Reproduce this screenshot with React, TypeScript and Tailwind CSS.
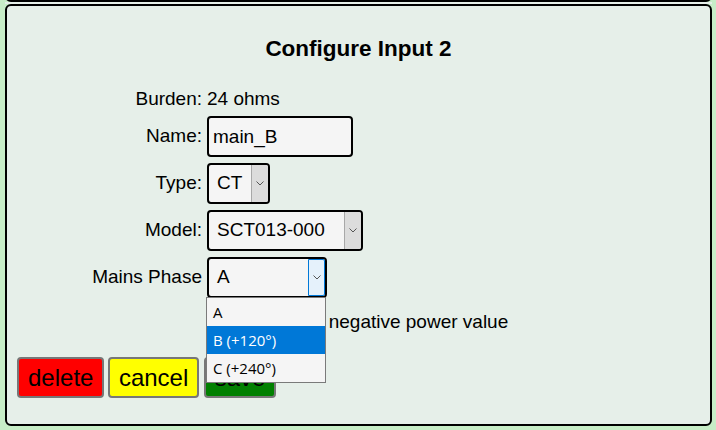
import type { ReactNode } from 'react';

function Chevron() {
  return (
    <svg width="8" height="5" viewBox="0 0 8 5" fill="none">
      <polyline points="0.5,0.5 4,4 7.5,0.5" stroke="#555" strokeWidth="1" />
    </svg>
  );
}

type SelectBoxProps = {
  value: string;
  width: string;
  focused?: boolean;
  children?: ReactNode;
};

function SelectBox({ value, width, focused, children }: SelectBoxProps) {
  return (
    <div className={`relative flex h-[41px] ${width} rounded-[4px] border-2 border-black bg-[#f5f5f5]`}>
      <div className="flex flex-1 items-center pl-[8px]">{value}</div>
      {focused ? (
        <div className="flex w-[17px] items-center justify-center rounded-r-[2px] border border-[#0078d7] bg-[#e5f1fb]">
          <Chevron />
        </div>
      ) : (
        <div className="flex w-[17px] items-center justify-center rounded-r-[2px] border-l border-[#a8a8a8] bg-[#dcdcdc]">
          <Chevron />
        </div>
      )}
      {children}
    </div>
  );
}

function Row({ label, children }: { label: string; children: ReactNode }) {
  return (
    <div className="flex items-center">
      <div className="w-[195px] text-right">{label}</div>
      <div className="ml-[5px]">{children}</div>
    </div>
  );
}

const phases = ['A', 'B (+120°)', 'C (+240°)'];

export default function App() {
  return (
    <div className="h-[430px] w-[716px] overflow-hidden bg-[#c7edc7] font-['Liberation_Sans',Arial,sans-serif] text-black">
      <div className="ml-[5px] flex w-[707px] flex-col">
        {/* bottom edge of the panel above */}
        <div className="-mt-[8px] h-[10px] rounded-b-[6px] border-2 border-black bg-[#e6efe9]" />
        <div className="h-[2px] bg-[#e6efe9]" />

        <div className="h-[422px] rounded-[6px] border-2 border-black bg-[#e6efe9]">
          <h2 className="pt-[30px] text-center text-[22.5px] font-bold leading-[25px]">Configure Input 2</h2>

          <div className="mt-[27px] flex flex-col text-[19px]">
            <div className="flex h-[22px] items-center leading-[22px]">
              <div className="w-[195px] text-right">Burden:</div>
              <div className="ml-[5px]">24 ohms</div>
            </div>

            <div className="mt-[6px] flex flex-col gap-[6px]">
              <Row label="Name:">
                <input
                  defaultValue="main_B"
                  className="h-[41px] w-[146px] rounded-[4px] border-2 border-black bg-[#f5f5f5] px-[4px] text-[19px] outline-none"
                />
              </Row>
              <Row label="Type:">
                <SelectBox value="CT" width="w-[63px]" />
              </Row>
              <Row label="Model:">
                <SelectBox value="SCT013-000" width="w-[156px]" />
              </Row>
              <Row label="Mains Phase">
                <SelectBox value="A" width="w-[120px]" focused>
                  <div className="absolute left-[-3px] top-[38px] z-10 w-[120px] border border-[#7a7a7a] bg-[#f5f5f5] font-['Open_Sans','Noto_Sans',sans-serif] text-[15px]">
                    {phases.map((p, i) => (
                      <div
                        key={p}
                        className={`flex h-[28px] items-center pl-[6px] ${i === 1 ? 'bg-[#0078d7] text-white' : 'text-black'}`}
                      >
                        {p}
                      </div>
                    ))}
                  </div>
                </SelectBox>
              </Row>
            </div>

            <div className="mt-[13px] flex h-[22px] items-center leading-[22px]">
              <div className="w-[195px]" />
              <div className="ml-[59px] flex items-center">
                <input type="checkbox" className="mr-[4px] h-[13px] w-[13px]" />
                <span>Allow negative power value</span>
              </div>
            </div>
          </div>

          <div className="mt-[24px] flex gap-[4px] pl-[10px] text-[24px]">
            <button className="rounded-[4px] border-2 border-[#777] bg-[#ff0000] px-[9px] py-[5px] leading-[27px]">delete</button>
            <button className="rounded-[4px] border-2 border-[#777] bg-[#ffff00] px-[8.5px] py-[5px] leading-[27px]">cancel</button>
            <button className="ml-[1px] rounded-[4px] border-2 border-[#777] bg-[#008000] px-[9px] py-[5px] leading-[27px]">save</button>
          </div>
        </div>
      </div>
    </div>
  );
}
